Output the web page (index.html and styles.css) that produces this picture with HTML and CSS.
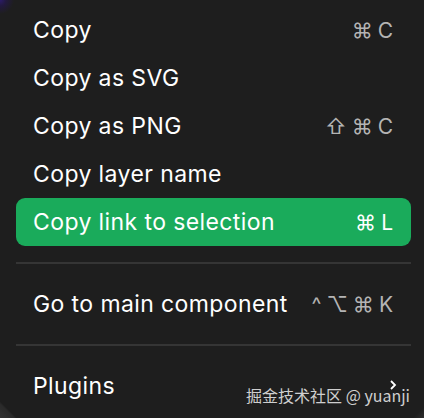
FILE: index.html
```html
<!DOCTYPE html>
<html lang="en">
    <head>
        <meta charset="UTF-8">
        <title>Context menu</title>
        <link rel="stylesheet" href="styles.css">
    </head>
    <body>
        <div class="menu">
            <div class="item">
                <span class="label">Copy</span>
                <span class="keys"><span>⌘</span><span>C</span></span>
            </div>
            <div class="item">
                <span class="label">Copy as SVG</span>
            </div>
            <div class="item">
                <span class="label">Copy as PNG</span>
                <span class="keys"><span>⇧</span><span>⌘</span><span>C</span></span>
            </div>
            <div class="item">
                <span class="label">Copy layer name</span>
            </div>
            <div class="item active">
                <span class="label">Copy link to selection</span>
                <span class="keys"><span>⌘</span><span>L</span></span>
            </div>
            <div class="sep"></div>
            <div class="item">
                <span class="label">Go to main component</span>
                <span class="keys"><span>^</span><span>⌥</span><span>⌘</span><span>K</span></span>
            </div>
            <div class="sep"></div>
            <div class="item">
                <span class="label">Plugins</span>
                <svg class="chevron" width="8" height="12" viewBox="0 0 8 12">
                    <path d="M2 2 L6 6 L2 10" fill="none" stroke="#fff" stroke-width="1.8"/>
                </svg>
            </div>
        </div>
        <div class="watermark">掘金技术社区 @ yuanji</div>
    </body>
</html>
```

FILE: styles.css
```css
html, body {
    margin: 0;
    height: 100%;
}
body {
    background:
        radial-gradient(circle at 0 0, #2c1c6a 0, #22193f 6px, transparent 14px),
        linear-gradient(45deg, #333 0, #2a2a2a 10px, transparent 12px),
        linear-gradient(-45deg, #2e2e2e 0, transparent 8px),
        #1e1e1e;
    font-family: Inter, "Noto Sans", sans-serif;
    color: #fff;
    position: relative;
    overflow: hidden;
}
.menu {
    display: flex;
    flex-direction: column;
    padding: 6px 13px 0 16px;
}
.item {
    display: flex;
    align-items: center;
    justify-content: space-between;
    height: 48px;
    padding: 0 18px 0 17px;
    border-radius: 9px;
    font-size: 23px;
    letter-spacing: 0.4px;
}
.item.active {
    background: #1aab5b;
}
.keys {
    display: flex;
    gap: 5px;
    color: #b4b4b4;
    font-size: 21px;
    letter-spacing: 0;
}
.item.active .keys {
    color: #fff;
}
.sep {
    height: 2px;
    background: #353535;
    margin: 16px 0;
}
.chevron {
    margin-right: -4px;
    margin-top: -2px;
}
.watermark {
    position: absolute;
    right: 14px;
    bottom: 11px;
    font-size: 16px;
    color: #cfcfcf;
    font-family: "Noto Sans CJK SC", Inter, sans-serif;
}
```
